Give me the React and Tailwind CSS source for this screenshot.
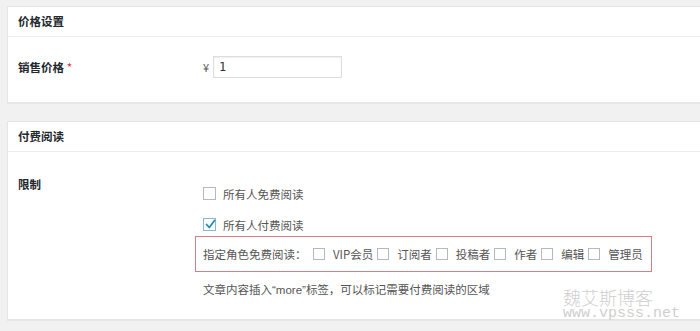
import React from "react";

const FONT = { fontFamily: '"Noto Sans CJK SC", "Noto Sans", sans-serif' };
const LATIN = { fontFamily: '"Liberation Sans", sans-serif' };

function Box({ size = 13, checked = false }) {
  return (
    <span
      className={`relative inline-block shrink-0 border bg-white ${checked ? "border-[#8fb5d6]" : "border-[#b4b9be]"} ${size === 13 ? "w-[13px] h-[13px]" : "w-[12px] h-[12px]"}`}
    >
      {checked && (
        <svg className="absolute left-[0px] top-[-1px]" width="13" height="13" viewBox="0 0 13 13">
          <path d="M2.5 6.5 L5.3 9.5 L10.5 2.5" fill="none" stroke="#1e8cbe" strokeWidth="1.8" strokeLinecap="round" strokeLinejoin="round" />
        </svg>
      )}
    </span>
  );
}

function Header({ children }) {
  return (
    <div className="h-[30px] border-b border-[#eeeeee] pl-[10px] flex items-center text-[11.5px] font-bold text-[#23282d]">
      {children}
    </div>
  );
}

export default function App() {
  const roles = ["VIP会员", "订阅者", "投稿者", "作者", "编辑", "管理员"];
  return (
    <div className="relative w-[700px] h-[331px] overflow-hidden bg-[#f1f1f1] pt-[6px] pl-[7px]" style={FONT}>
      <div className="bg-white border border-r-0 border-[#e5e5e5] shadow-[0_1px_1px_rgba(0,0,0,0.04)]">
        <Header>价格设置</Header>
        <div className="flex items-center pt-[19px] pb-[24px]">
          <div className="w-[187px] pl-[10px] text-[11.5px] font-bold text-[#23282d] leading-[16px]">
            销售价格 <span className="text-[#dc3232] font-normal">*</span>
          </div>
          <div className="flex items-center pl-[8px]">
            <span className="w-[10px] text-[11px] text-[#555]">¥</span>
            <div className="w-[129px] h-[22px] border border-[#dddddd] shadow-[inset_0_1px_2px_rgba(0,0,0,0.07)] flex items-center pl-[5px] text-[12px] text-[#333]" style={{ fontFamily: '"DejaVu Sans Mono", monospace' }}>
              1
            </div>
          </div>
        </div>
      </div>

      <div className="mt-[18px] bg-white border border-r-0 border-[#e5e5e5] shadow-[0_1px_1px_rgba(0,0,0,0.04)]">
        <Header>付费阅读</Header>
        <div className="flex">
          <div className="w-[187px] shrink-0 pl-[10px] pt-[24px] text-[11.5px] font-bold text-[#23282d] leading-[16px]">
            限制
          </div>
          <div className="flex flex-col pt-[35px] pb-[21px] text-[11.5px] text-[#555] whitespace-nowrap">
            <div className="flex items-center h-[13px] pl-[8px]">
              <Box />
              <span className="ml-[7px] leading-[16px]">所有人免费阅读</span>
            </div>
            <div className="flex items-center h-[13px] pl-[8px] mt-[18px]">
              <Box checked />
              <span className="ml-[7px] leading-[16px]">所有人付费阅读</span>
            </div>
            <div className="mt-[5px] w-[457px] h-[36px] border border-[#d47f86] flex items-center px-[7px]">
              <span className="w-[110px] shrink-0 leading-[16px] whitespace-nowrap">指定角色免费阅读：</span>
              {roles.map((r, i) => (
                <React.Fragment key={r}>
                  <span className={`shrink-0 flex ${i === 0 ? "" : "ml-[4px]"}`}><Box size={12} /></span>
                  <span className="ml-[8px] shrink-0 leading-[16px] whitespace-nowrap">{r}</span>
                </React.Fragment>
              ))}
            </div>
            <div className="mt-[9px] pl-[8px] leading-[16px]">
              文章内容插入<span style={LATIN}>“more”</span>标签，可以标记需要付费阅读的区域
            </div>
          </div>
        </div>
      </div>

      <div className="absolute left-[563px] top-[288px] text-[#cfcfcf] pointer-events-none">
        <div className="text-[18px] leading-[18px] font-light">魏艾斯博客</div>
        <div className="mt-[2px] text-[15px] leading-[12px]" style={{ fontFamily: '"Liberation Mono", monospace' }}>www.vpsss.net</div>
      </div>
    </div>
  );
}
